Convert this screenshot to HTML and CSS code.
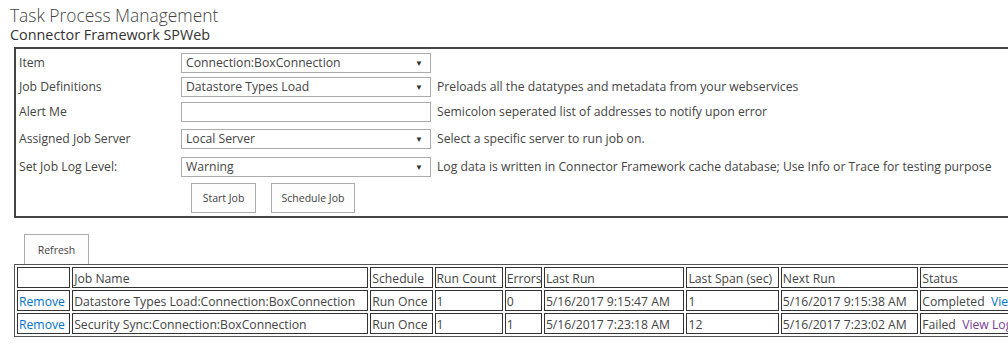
FILE: index.html
```html
<!DOCTYPE html>
<html lang="en">
<head>
    <meta charset="UTF-8">
    <title>Task Process Management</title>
    <link rel="stylesheet" href="styles.css">
</head>
<body>
    <div class="page">
        <h1 class="title">Task Process Management</h1>
        <div class="subtitle">Connector Framework SPWeb</div>

        <div class="job-box">
            <div class="form-grid">
                <div class="label">Item</div>
                <div class="select"><span>Connection:BoxConnection</span><span class="arrow">&#9660;</span></div>
                <div class="hint"></div>

                <div class="label">Job Definitions</div>
                <div class="select"><span>Datastore Types Load</span><span class="arrow">&#9660;</span></div>
                <div class="hint">Preloads all the datatypes and metadata from your webservices</div>

                <div class="label">Alert Me</div>
                <div class="select input"></div>
                <div class="hint">Semicolon seperated list of addresses to notify upon error</div>

                <div class="label">Assigned Job Server</div>
                <div class="select"><span>Local Server</span><span class="arrow">&#9660;</span></div>
                <div class="hint">Select a specific server to run job on.</div>

                <div class="label">Set Job Log Level:</div>
                <div class="select"><span>Warning</span><span class="arrow">&#9660;</span></div>
                <div class="hint">Log data is written in Connector Framework cache database; Use Info or Trace for testing purpose</div>
            </div>
            <div class="actions">
                <button class="btn start">Start Job</button>
                <button class="btn schedule">Schedule Job</button>
            </div>
        </div>

        <button class="btn refresh">Refresh</button>

        <table class="jobs">
            <colgroup>
                <col class="c-remove">
                <col class="c-name">
                <col class="c-schedule">
                <col class="c-count">
                <col class="c-errors">
                <col class="c-last">
                <col class="c-span">
                <col class="c-next">
                <col class="c-status">
            </colgroup>
            <tr>
                <td></td>
                <td>Job Name</td>
                <td>Schedule</td>
                <td>Run Count</td>
                <td>Errors</td>
                <td>Last Run</td>
                <td>Last Span (sec)</td>
                <td>Next Run</td>
                <td>Status</td>
            </tr>
            <tr>
                <td><a href="#">Remove</a></td>
                <td>Datastore Types Load:Connection:BoxConnection</td>
                <td>Run Once</td>
                <td>1</td>
                <td>0</td>
                <td>5/16/2017 9:15:47 AM</td>
                <td>1</td>
                <td>5/16/2017 9:15:38 AM</td>
                <td>Completed&nbsp; <a href="#">View Log</a></td>
            </tr>
            <tr>
                <td><a href="#">Remove</a></td>
                <td>Security Sync:Connection:BoxConnection</td>
                <td>Run Once</td>
                <td>1</td>
                <td>1</td>
                <td>5/16/2017 7:23:18 AM</td>
                <td>12</td>
                <td>5/16/2017 7:23:02 AM</td>
                <td>Failed&nbsp; <a href="#" class="visited">View Log</a></td>
            </tr>
        </table>
    </div>
</body>
</html>
```

FILE: styles.css
```css
* {
    margin: 0;
    padding: 0;
    box-sizing: border-box;
}

html, body {
    overflow: hidden;
}

body {
    font-family: "Open Sans", "Noto Sans", sans-serif;
    font-size: 12.2px;
    color: #444;
    background: #fff;
}

.page {
    width: 1120px;
    padding: 4px 0 0 10px;
}

.title {
    font-size: 17.4px;
    font-weight: 300;
    line-height: 22px;
    color: #444;
}

.subtitle {
    font-size: 14.4px;
    line-height: 17px;
    margin-bottom: 4px;
    color: #333;
}

.job-box {
    margin-left: 4px;
    border: 2px solid #444;
    padding: 4px 0 3px 3px;
}

.form-grid {
    display: grid;
    grid-template-columns: 162px 250px 1fr;
    grid-template-rows: 24px 25px 27px 28px 26px;
    align-items: start;
}

.label {
    line-height: 20px;
}

.select {
    height: 20px;
    border: 1px solid #ababab;
    background: #fff;
    display: flex;
    justify-content: space-between;
    align-items: center;
    padding: 0 7px 0 4px;
    line-height: 18px;
}

.arrow {
    font-size: 8px;
    color: #333;
}

.hint {
    font-size: 12.2px;
    line-height: 20px;
    padding-left: 6px;
    white-space: nowrap;
}

.actions {
    display: flex;
    gap: 15px;
    padding-left: 172px;
}

.btn {
    font-family: "Open Sans", sans-serif;
    font-size: 10.5px;
    color: #444;
    background: #fdfdfd;
    border: 1px solid #ababab;
    height: 30px;
    cursor: pointer;
}

.start {
    width: 65px;
}

.schedule {
    width: 84px;
}

.refresh {
    display: block;
    width: 65px;
    margin: 16px 0 0 14px;
    border-bottom: none;
}

.jobs {
    table-layout: fixed;
    width: 1080px;
    margin-left: 4px;
    border: 1px solid #555;
    border-spacing: 2px 2px;
    font-size: 12.2px;
}

.c-remove { width: 53px; }
.c-name { width: 295px; }
.c-schedule { width: 62px; }
.c-count { width: 68px; }
.c-errors { width: 37px; }
.c-last { width: 140px; }
.c-span { width: 92px; }
.c-next { width: 137px; }
.c-status { width: 170px; }

.jobs td {
    border: 1px solid #333;
    padding: 3px 1px 0;
    height: 21px;
    line-height: 16px;
    vertical-align: top;
    white-space: nowrap;
    overflow: hidden;
}

.jobs a {
    color: #0072c6;
    text-decoration: none;
}

.jobs a.visited {
    color: #7a3e99;
}
```
